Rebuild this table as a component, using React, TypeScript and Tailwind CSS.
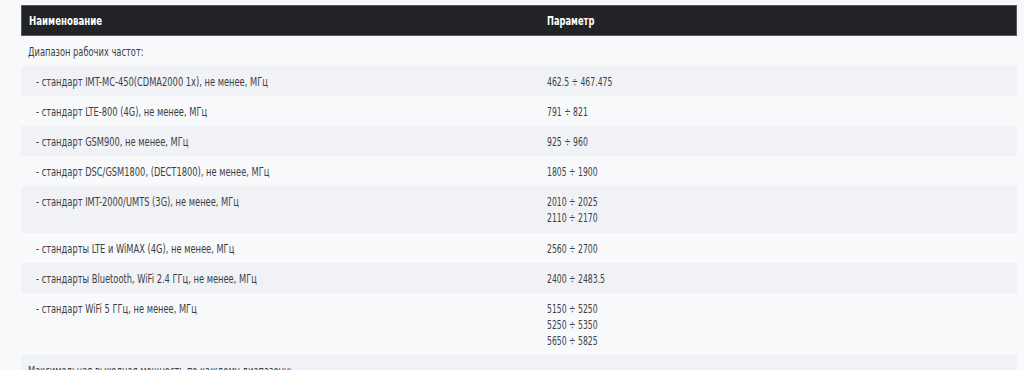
import React from "react";

type Row = { name: string; values: string[]; sub?: boolean };

const rows: Row[] = [
  { name: "Диапазон рабочих частот:", values: [] },
  { name: "- стандарт IMT-MC-450(CDMA2000 1x), не менее, МГц", values: ["462.5 ÷ 467.475"], sub: true },
  { name: "- стандарт LTE-800 (4G), не менее, МГц", values: ["791 ÷ 821"], sub: true },
  { name: "- стандарт GSM900, не менее, МГц", values: ["925 ÷ 960"], sub: true },
  { name: "- стандарт DSC/GSM1800, (DECT1800), не менее, МГц", values: ["1805 ÷ 1900"], sub: true },
  { name: "- стандарт IMT-2000/UMTS (3G), не менее, МГц", values: ["2010 ÷ 2025", "2110 ÷ 2170"], sub: true },
  { name: "- стандарты LTE и WiMAX (4G), не менее, МГц", values: ["2560 ÷ 2700"], sub: true },
  { name: "- стандарты Bluetooth, WiFi 2.4 ГГц, не менее, МГц", values: ["2400 ÷ 2483.5"], sub: true },
  { name: "- стандарт WiFi 5 ГГц, не менее, МГц", values: ["5150 ÷ 5250", "5250 ÷ 5350", "5650 ÷ 5825"], sub: true },
  { name: "Максимальная выходная мощность по каждому диапазону:", values: [] },
];

export default function App() {
  return (
    <div
      className="min-h-screen w-full bg-[#f8f9fb] pt-[5px] pl-[21px] pr-[7px] text-[#3c3e44] text-[13px]"
      style={{ fontFamily: '"DejaVu Sans Condensed", "DejaVu Sans", sans-serif' }}
    >
      <div className="w-[996px]">
        <div className="grid grid-cols-[519px_1fr] h-[31px] bg-[#222327] border border-[#55575c] text-white text-[12px] font-bold items-center">
          <div className="pl-[7px]">
            <span className="inline-block origin-left scale-x-[0.8] whitespace-nowrap">Наименование</span>
          </div>
          <div className="pl-[6px]">
            <span className="inline-block origin-left scale-x-[0.77] whitespace-nowrap">Параметр</span>
          </div>
        </div>
        {rows.map((r, i) => (
          <div
            key={i}
            className={`grid grid-cols-[519px_1fr] pt-[8px] leading-[16px] ${r.values.length === 2 ? "pb-[7px]" : "pb-[6px]"} ${i % 2 === 1 ? "bg-[#f1f2f6]" : ""}`}
          >
            <div className={r.sub ? "pl-[15px]" : "pl-[7px]"}>
              <span className="inline-block origin-left scale-x-[0.71] whitespace-nowrap">{r.name}</span>
            </div>
            <div className="pl-[7px]">
              {r.values.length === 0 ? (
                <div>&nbsp;</div>
              ) : (
                r.values.map((v) => (
                  <div key={v}>
                    <span className="inline-block origin-left scale-x-[0.66] whitespace-nowrap">{v}</span>
                  </div>
                ))
              )}
            </div>
          </div>
        ))}
      </div>
    </div>
  );
}
